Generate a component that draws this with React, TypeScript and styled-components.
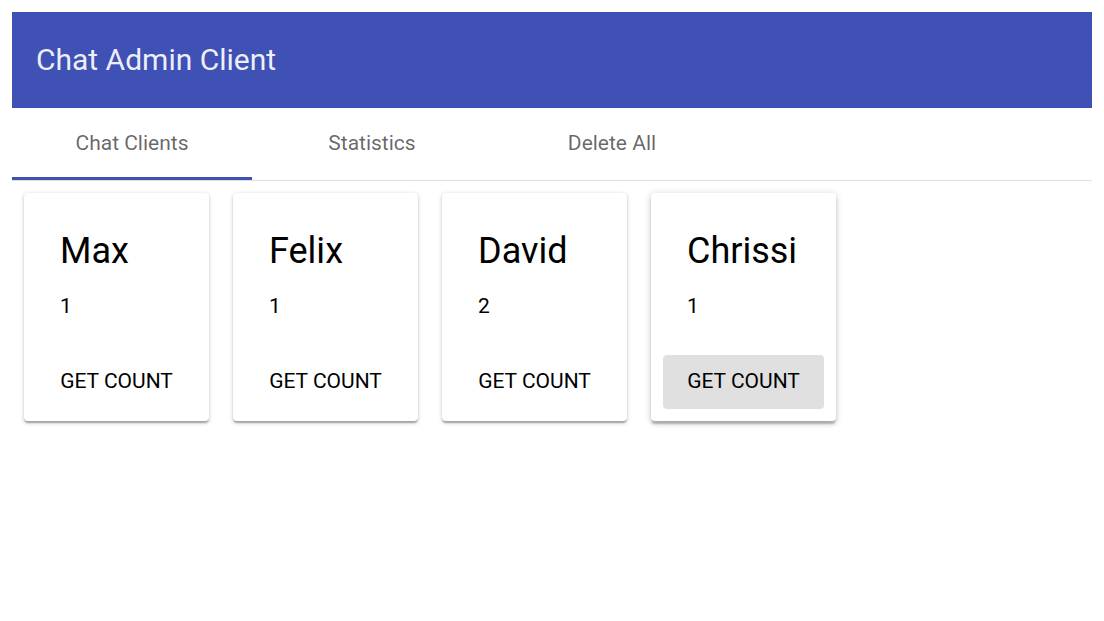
import React from "react";
import styled, { createGlobalStyle } from "styled-components";

const GlobalStyle = createGlobalStyle`
  html, body {
    margin: 0;
    padding: 0;
    background: #ffffff;
    font-family: Roboto, "Liberation Sans", Arial, sans-serif;
  }
  * { box-sizing: border-box; }
`;

const Page = styled.div`
  padding: 12px;
`;

const AppBar = styled.header`
  height: 96px;
  background: #3f51b5;
  display: flex;
  align-items: center;
  padding: 0 24px;
`;

const Title = styled.h1`
  margin: 0;
  font-size: 30px;
  font-weight: 400;
  color: rgba(255, 255, 255, 0.92);
  line-height: 1;
`;

const TabBar = styled.nav`
  display: flex;
  border-bottom: 1px solid #e0e0e0;
`;

const Tab = styled.button<{ $active?: boolean }>`
  width: 240px;
  height: 72px;
  border: none;
  background: transparent;
  font-family: Roboto, "Liberation Sans", Arial, sans-serif;
  font-size: 21px;
  font-weight: 400;
  color: rgba(0, 0, 0, 0.6);
  padding: 0;
  cursor: pointer;
  border-bottom: 3px solid ${(p) => (p.$active ? "#3f51b5" : "transparent")};
`;

const CardRow = styled.main`
  display: flex;
  gap: 24px;
  padding: 12px;
  align-items: flex-start;
`;

const Card = styled.section<{ $raised?: boolean }>`
  background: #fff;
  border-radius: 4px;
  box-shadow: ${(p) =>
    p.$raised
      ? "0px 1.5px 7.5px 0px rgba(0,0,0,0.2), 0px 3px 3px 0px rgba(0,0,0,0.14), 0px 4.5px 1.5px -1.5px rgba(0,0,0,0.12)"
      : "0px 1.5px 4.5px 0px rgba(0,0,0,0.2), 0px 1.5px 1.5px 0px rgba(0,0,0,0.14), 0px 3px 1.5px -1.5px rgba(0,0,0,0.12)"};
`;

const CardContent = styled.div`
  padding: 24px 36px 21px;
`;

const Name = styled.h2`
  margin: 10px 0 0;
  font-size: 36px;
  line-height: 49px;
  font-weight: 400;
  color: #000;
`;

const Count = styled.p`
  margin: 15px 0 0;
  font-size: 21px;
  line-height: 31px;
  color: #000;
`;

const CardActions = styled.div`
  padding: 12px;
`;

const Button = styled.button<{ $hover?: boolean }>`
  width: 161px;
  height: 54px;
  padding: 0 0 2px;
  border: none;
  border-radius: 4px;
  background: ${(p) => (p.$hover ? "#e0e0e0" : "transparent")};
  font-family: Roboto, "Liberation Sans", Arial, sans-serif;
  font-size: 21px;
  font-weight: 400;
  text-transform: uppercase;
  color: #000;
  cursor: pointer;
`;

const clients = [
  { name: "Max", count: 1 },
  { name: "Felix", count: 1 },
  { name: "David", count: 2 },
  { name: "Chrissi", count: 1, hover: true },
];

export default function App() {
  return (
    <Page>
      <GlobalStyle />
      <AppBar>
        <Title>Chat Admin Client</Title>
      </AppBar>
      <TabBar>
        <Tab $active>Chat Clients</Tab>
        <Tab>Statistics</Tab>
        <Tab>Delete All</Tab>
      </TabBar>
      <CardRow>
        {clients.map((c) => (
          <Card key={c.name} $raised={c.hover}>
            <CardContent>
              <Name>{c.name}</Name>
              <Count>{c.count}</Count>
            </CardContent>
            <CardActions>
              <Button $hover={c.hover}>Get Count</Button>
            </CardActions>
          </Card>
        ))}
      </CardRow>
    </Page>
  );
}
